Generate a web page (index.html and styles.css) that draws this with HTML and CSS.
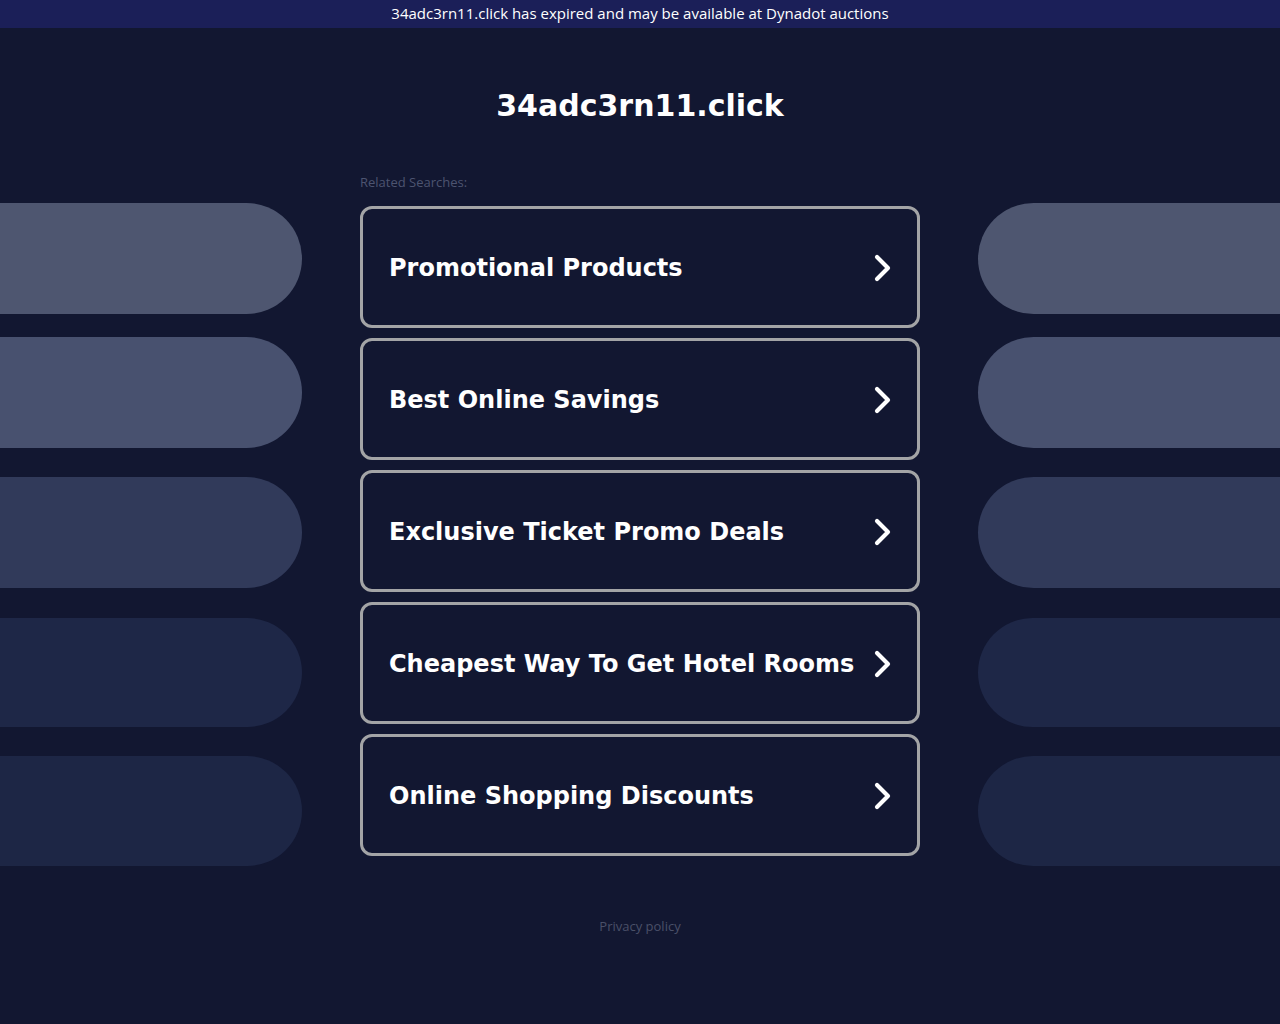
FILE: index.html
```html
<!DOCTYPE html>
<html lang="en">

<head>
    <meta charset="UTF-8">
    <meta name="viewport" content="width=device-width, initial-scale=1.0">
    <title>34adc3rn11.click</title>
    <link rel="stylesheet" href="styles.css">
</head>

<body>
    <div class="expired-bar">34adc3rn11.click has expired and may be available at Dynadot auctions</div>

    <h1 class="domain">34adc3rn11.click</h1>

    <div class="layout">
        <!-- left decoration -->
        <div class="side side-left">
            <div class="pill pill-1"></div>
            <div class="pill pill-2"></div>
            <div class="pill pill-3"></div>
            <div class="pill pill-4"></div>
            <div class="pill pill-5"></div>
        </div>

        <div class="searches">
            <p class="related">Related Searches:</p>
            <a class="search-card" href="#">Promotional Products<span class="chevron"><svg width="20" height="30" viewBox="0 0 20 30"><path d="M4 4 L15 15 L4 26" fill="none" stroke="#fff" stroke-width="4.2" stroke-linecap="round" stroke-linejoin="round"/></svg></span></a>
            <a class="search-card" href="#">Best Online Savings<span class="chevron"><svg width="20" height="30" viewBox="0 0 20 30"><path d="M4 4 L15 15 L4 26" fill="none" stroke="#fff" stroke-width="4.2" stroke-linecap="round" stroke-linejoin="round"/></svg></span></a>
            <a class="search-card" href="#">Exclusive Ticket Promo Deals<span class="chevron"><svg width="20" height="30" viewBox="0 0 20 30"><path d="M4 4 L15 15 L4 26" fill="none" stroke="#fff" stroke-width="4.2" stroke-linecap="round" stroke-linejoin="round"/></svg></span></a>
            <a class="search-card" href="#">Cheapest Way To Get Hotel Rooms<span class="chevron"><svg width="20" height="30" viewBox="0 0 20 30"><path d="M4 4 L15 15 L4 26" fill="none" stroke="#fff" stroke-width="4.2" stroke-linecap="round" stroke-linejoin="round"/></svg></span></a>
            <a class="search-card" href="#">Online Shopping Discounts<span class="chevron"><svg width="20" height="30" viewBox="0 0 20 30"><path d="M4 4 L15 15 L4 26" fill="none" stroke="#fff" stroke-width="4.2" stroke-linecap="round" stroke-linejoin="round"/></svg></span></a>
        </div>

        <!-- right decoration -->
        <div class="side side-right">
            <div class="pill pill-1"></div>
            <div class="pill pill-2"></div>
            <div class="pill pill-3"></div>
            <div class="pill pill-4"></div>
            <div class="pill pill-5"></div>
        </div>
    </div>

    <footer>
        <a href="#">Privacy policy</a>
    </footer>
</body>

</html>
```

FILE: styles.css
```css
/* Reset default */
body,
h1,
p,
a {
    margin: 0;
    padding: 0;
    box-sizing: border-box;
}

body {
    background-color: #121731;
    color: #fff;
    font-family: "DejaVu Sans", sans-serif;
    min-height: 1024px;
}

/* Expired notice */
.expired-bar {
    background-color: #1b1f58;
    height: 28px;
    line-height: 26px;
    text-align: center;
    font-family: "Open Sans", sans-serif;
    font-size: 15px;
    color: #fff;
}

/* Domain title */
.domain {
    text-align: center;
    font-size: 30px;
    font-weight: bold;
    margin-top: 60px;
    line-height: 36px;
}

/* Three columns */
.layout {
    display: flex;
    justify-content: space-between;
    margin-top: 49px;
}

.side {
    width: 302px;
    display: flex;
    flex-direction: column;
    padding-top: 30px;
}

.pill {
    height: 111px;
    background-color: #4e5670;
}

.side-left .pill {
    border-radius: 0 56px 56px 0;
}

.side-right .pill {
    border-radius: 56px 0 0 56px;
}

.pill-2 {
    margin-top: 23px;
    background-color: #48516f;
}

.pill-3 {
    margin-top: 29px;
    background-color: #313a5a;
}

.pill-4 {
    margin-top: 30px;
    height: 109px;
    background-color: #1e2747;
}

.pill-5 {
    margin-top: 29px;
    height: 110px;
    background-color: #1d2645;
}

/* Related searches */
.searches {
    width: 560px;
    display: flex;
    flex-direction: column;
    gap: 10px;
}

.related {
    font-family: "Open Sans", sans-serif;
    font-size: 13px;
    color: #4d5470;
    line-height: 18px;
    margin-bottom: 5px;
}

.search-card {
    display: flex;
    align-items: center;
    justify-content: space-between;
    height: 122px;
    padding: 2px 24px 0 26px;
    border: 3px solid #a3a4a6;
    border-radius: 12px;
    color: #fff;
    text-decoration: none;
    font-size: 24px;
    font-weight: bold;
}

.chevron {
    display: flex;
}

/* Footer */
footer {
    text-align: center;
    margin-top: 50px;
}

footer a {
    font-family: "Open Sans", sans-serif;
    font-size: 13px;
    color: #4a5068;
    text-decoration: none;
}
```
